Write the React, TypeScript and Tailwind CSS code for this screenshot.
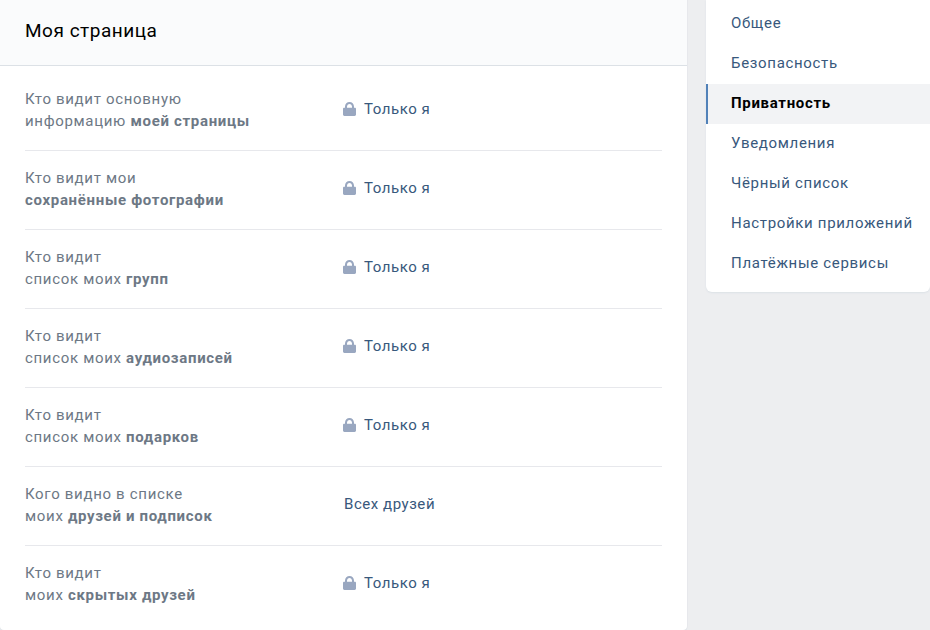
const rows: { a: string; b: string; c: string; lock: boolean }[] = [
  { a: "Кто видит основную", b: "информацию ", c: "моей страницы", lock: true },
  { a: "Кто видит мои", b: "", c: "сохранённые фотографии", lock: true },
  { a: "Кто видит", b: "список моих ", c: "групп", lock: true },
  { a: "Кто видит", b: "список моих ", c: "аудиозаписей", lock: true },
  { a: "Кто видит", b: "список моих ", c: "подарков", lock: true },
  { a: "Кого видно в списке", b: "моих ", c: "друзей и подписок", lock: false },
  { a: "Кто видит", b: "моих ", c: "скрытых друзей", lock: true },
];

const menu = ["Общее", "Безопасность", "Приватность", "Уведомления", "Чёрный список", "Настройки приложений", "Платёжные сервисы"];

function Lock() {
  return (
    <svg width="13" height="14" viewBox="0 0 13 14" className="shrink-0">
      <path d="M2 7V4.600C2 2 4 0 6.500 0S11 2 11 4.600V7H9V4.700C9 3.200 7.900 2 6.500 2S4 3.200 4 4.700V7Z" fill="#99a7c0" />
      <path d="M.8 5.700h11.400c.45 0 .8.35.8.8v6.100c0 .8-.6 1.400-1.400 1.400H1.400C.6 14 0 13.400 0 12.600V6.500c0-.45.35-.8.8-.8Z" fill="#99a7c0" />
    </svg>
  );
}

export default function App() {
  return (
    <div className="flex h-[630px] w-[930px] items-start overflow-hidden bg-[#edeef0] font-['Roboto',sans-serif] text-[15px] leading-[22px] tracking-[0.68px]">
      <main className="h-[630px] w-[687px] shrink-0 overflow-hidden rounded-b-[4px] bg-white shadow-[0_1px_0_0_#dce1e6,0_0_0_1px_#e7e8ec]">
        <header className="flex h-[66px] items-center border-b border-[#dce1e6] bg-[#fafbfc] px-[25px] pb-[4px] text-[19px] tracking-[0.52px] text-black">
          Моя страница
        </header>
        <div className="px-[25px] pt-1.5">
          {rows.map((r, i) => (
            <div key={i} className="flex items-center border-b border-[#e7e8ec] pb-[18px] pt-4 last:border-b-0">
              <div className="w-[318px] shrink-0 text-[#6d7885]">
                <div>{r.a}</div>
                <div>
                  {r.b}
                  <span className="font-bold">{r.c}</span>
                </div>
              </div>
              <div className="flex -translate-y-px items-center gap-[8px] text-[#38587c]">
                {r.lock && <Lock />}
                <span className={r.lock ? "tracking-[0.55px]" : "pl-px tracking-[0.55px]"}>{r.lock ? "Только я" : "Всех друзей"}</span>
              </div>
            </div>
          ))}
        </div>
      </main>
      <aside className="ml-[19px] w-[224px] shrink-0 rounded-b-[6px] bg-white pb-2 pt-1 shadow-[0_1px_2px_0_#dce1e6]">
        {menu.map((m) => (
          <div
            key={m}
            className={
              m === "Приватность"
                ? "flex h-10 items-center border-l-2 border-[#5181b8] bg-[#f2f3f5] pb-[2px] pl-[23px] font-bold text-black"
                : "flex h-10 items-center pb-[2px] pl-[25px] text-[#38587c]"
            }
          >
            {m}
          </div>
        ))}
      </aside>
    </div>
  );
}
